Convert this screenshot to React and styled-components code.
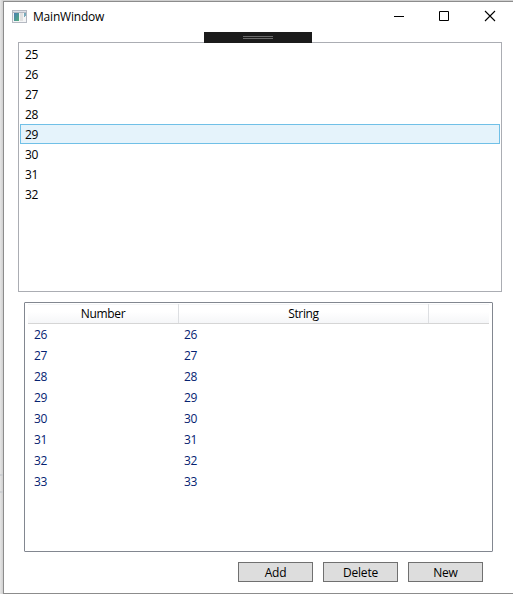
import React from "react";
import styled, { createGlobalStyle } from "styled-components";

const GlobalStyle = createGlobalStyle`
  * { box-sizing: border-box; }
  body { margin: 0; overflow: hidden; background: #dcdcdc; }
`;

const Desktop = styled.div`
  width: 513px;
  height: 594px;
  padding: 1px 0 0 3px;
  overflow: hidden;
  background:
    linear-gradient(#cdcfd2, #cdcfd2) 0 474px / 3px 2px no-repeat,
    linear-gradient(#cdcfd2, #cdcfd2) 0 491px / 3px 2px no-repeat,
    linear-gradient(to right, #e6e6e6 0, #dedede 1px, #d0d0d0 3px);
  font: 12px/20px "Open Sans", "Noto Sans", sans-serif;
  color: #000;
`;

const Window = styled.main`
  display: flex;
  flex-direction: column;
  width: 520px;
  height: 593px;
  background: #fff;
  border: 1px solid #8c8c8c;
`;

const TitleBar = styled.header`
  display: flex;
  align-items: center;
  height: 30px;
  flex: none;
  padding-left: 8px;
`;

const Title = styled.span`
  flex: none;
  width: 343px;
  margin-left: 6px;
  letter-spacing: -0.2px;
`;

const Controls = styled.div`
  display: flex;
  height: 30px;
`;

const Control = styled.button`
  display: flex;
  width: ${(p) => p.$width}px;
  padding: 9px 0 0;
  border: 0;
  background: none;
`;

const DebugBar = styled.div`
  display: flex;
  flex: none;
  flex-direction: column;
  align-items: center;
  gap: 1px;
  width: 108px;
  height: 11px;
  margin: 0 0 -1px 200px;
  padding-top: 4px;
  background: #1b1b1b;
  position: relative;
  z-index: 1;
`;

const Grip = styled.span`
  width: 30px;
  height: 1px;
  background: #6b6b6b;
`;

const ListBox = styled.ul`
  flex: none;
  width: 484px;
  height: 250px;
  margin: 0 0 0 14px;
  padding: 1px;
  border: 1px solid #abadb3;
  list-style: none;
`;

const ListItem = styled.li`
  height: 20px;
  padding: 0 4px;
  line-height: 20px;
  letter-spacing: -0.35px;
  border: 1px solid ${(p) => (p.$selected ? "#70c0e7" : "transparent")};
  background: ${(p) => (p.$selected ? "#e5f3fb" : "transparent")};
`;

const GridView = styled.section`
  flex: none;
  width: 469px;
  height: 250px;
  margin: 10px 0 0 20px;
  padding: 1px 3px;
  border: 1px solid #828790;
  border-radius: 1px;
`;

const GridHeader = styled.div`
  display: grid;
  grid-template-columns: 151px 250px 60px;
  height: 20px;
  border-bottom: 1px solid #d5d5d5;
  background: linear-gradient(#f4f5f6 0 1px, #fff 1px, #fff 40%, #f5f6f8);
`;

const HeaderCell = styled.div`
  border-right: 1px solid ${(p) => (p.$last ? "transparent" : "#dddfe2")};
  line-height: 19px;
  text-align: center;
  letter-spacing: -0.35px;
`;

const GridRow = styled.div`
  display: grid;
  grid-template-columns: 150px 250px;
  height: 21px;
  padding-left: 6px;
  line-height: 21px;
  letter-spacing: -0.35px;
  color: #042271;
`;

const Actions = styled.footer`
  display: flex;
  gap: 10px;
  margin: 10px 0 0 234px;
`;

const ActionButton = styled.button`
  width: 75px;
  height: 20px;
  padding: 1px 0 0;
  border: 1px solid #707070;
  background: #ddd;
  font: inherit;
  line-height: 17px;
  letter-spacing: -0.2px;
  color: #000;
`;

const IconArt = styled.svg`
  flex: none;
  margin-top: -1px;
`;

const AppIcon = () => (
  <IconArt width="15" height="13" viewBox="0 0 15 13" shapeRendering="crispEdges">
    <defs>
      <linearGradient id="screen" x2="1" y2="1">
        <stop stopColor="#4a7fb5" />
        <stop offset="1" stopColor="#54ad7b" />
      </linearGradient>
    </defs>
    <path fill="#b5b9c2" d="M0 0h15v13H0z" />
    <path fill="#dfe2e9" d="M1 1h13v1H1z" />
    <path fill="#f4f5f6" d="M1 3h13v9H1z" />
    <path fill="url(#screen)" d="M2 3h5v8H2z" />
    <path fill="#e1e1e1" d="M8 3h3v8H8z" />
    <path fill="#79aabb" d="M12 3h2v3h-1v1h-1z" />
  </IconArt>
);

const numbers = [25, 26, 27, 28, 29, 30, 31, 32];

export default function App() {
  return (
    <Desktop>
      <GlobalStyle />
      <Window>
        <TitleBar>
          <AppIcon />
          <Title>MainWindow</Title>
          <Controls>
            <Control $width={45} aria-label="Minimize">
              <svg width="54" height="10" overflow="visible"><path d="M18 5h10v1H18z" /></svg>
            </Control>
            <Control $width={46} aria-label="Maximize">
              <svg width="46" height="10" overflow="visible"><path d="M18.5.5h9v9h-9z" fill="none" stroke="#000" /></svg>
            </Control>
            <Control $width={46} aria-label="Close">
              <svg width="46" height="10" overflow="visible"><path d="M18 0l10 10M28 0L18 10" stroke="#000" strokeWidth="1.1" /></svg>
            </Control>
          </Controls>
        </TitleBar>
        <DebugBar><Grip /><Grip /></DebugBar>
        <ListBox>
          {numbers.map((n) => (
            <ListItem key={n} $selected={n === 29}>{n}</ListItem>
          ))}
        </ListBox>
        <GridView>
          <GridHeader>
            <HeaderCell>Number</HeaderCell>
            <HeaderCell>String</HeaderCell>
            <HeaderCell $last />
          </GridHeader>
          {numbers.map((n) => (
            <GridRow key={n}><span>{n + 1}</span><span>{n + 1}</span></GridRow>
          ))}
        </GridView>
        <Actions>
          <ActionButton>Add</ActionButton>
          <ActionButton>Delete</ActionButton>
          <ActionButton>New</ActionButton>
        </Actions>
      </Window>
    </Desktop>
  );
}
